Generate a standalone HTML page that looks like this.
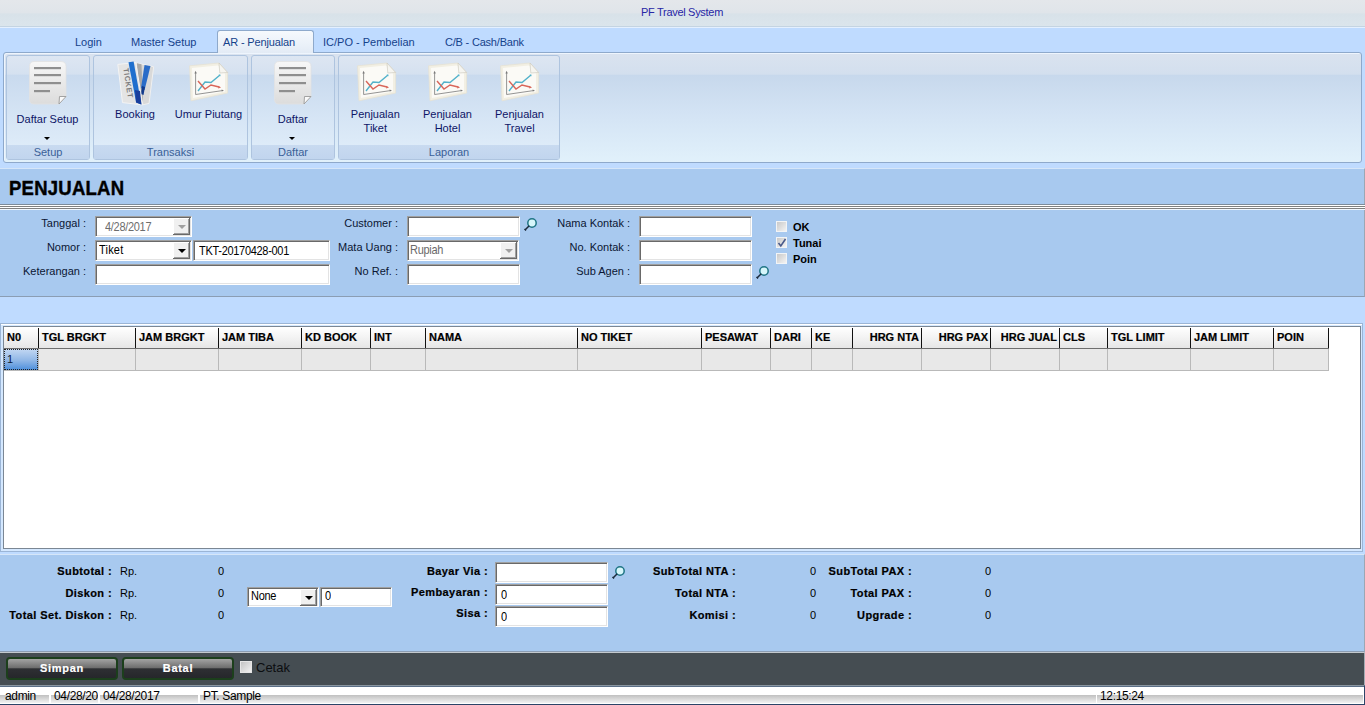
<!DOCTYPE html>
<html><head><meta charset="utf-8">
<style>
*{margin:0;padding:0;box-sizing:border-box}
html,body{width:1365px;height:705px;overflow:hidden;background:#bfdbff;font-family:"Liberation Sans",sans-serif;font-size:11px;line-height:13px;position:relative}
.a{position:absolute;white-space:nowrap}
#title{left:0;top:0;width:1365px;height:27px;background:linear-gradient(#e4e7eb,#e0e5ea 48%,#d8e2e9 54%,#dbe5ec);border-bottom:1px solid #c4d4e2}
#tabbar{left:0;top:27px;width:1365px;height:25px;background:#bfdbff;border-top:1px solid #e4f0ff}
.tab{color:#15428b;top:36px;z-index:2}
#acttab{left:217px;top:30px;width:97px;height:23px;border:1px solid #8ea9cb;border-bottom:none;border-radius:3px 3px 0 0;background:linear-gradient(#f6f9fd,#e9f0f8 70%,#e3ebf5)}
#ribbon{left:3px;top:52px;width:1359px;height:111px;border:1px solid #8ea9cb;border-radius:3px;background:linear-gradient(#dae3ef 0%,#d3dfee 19.5%,#c7d8ec 20.3%,#d3e3f4 55%,#e1f1fb 100%);box-shadow:inset 1px 1px 0 #eef5fd}
.grp{position:absolute;top:55px;height:105px;border:1px solid #aec4df;border-radius:3px;background:linear-gradient(#dde6f2 0%,#d5e1f0 17.6%,#c9daee 18.5%,#d6e5f5 60%,#e1eefa 100%)}
.glbl{position:absolute;left:0;right:0;bottom:0;height:14px;background:linear-gradient(#c8daf0,#c1d5ee);color:#3a6198;text-align:center;line-height:15px}
.btxt{color:#0e1566;text-align:center}
#formhdr{left:0;top:168px;width:1365px;height:36px;background:#a8c9ef;border-top:1px solid #d6e6f8;border-right:1px solid #9ba7b5}
#ptitle{left:9px;top:176px;-webkit-text-stroke:0.4px #000;font-size:18.5px;line-height:22px;font-weight:bold;color:#000;letter-spacing:0.25px;transform:scaleY(1.1);transform-origin:0 0}
#dbl{left:0;top:204px;width:1365px;height:6px;background:linear-gradient(#7d8b99 0,#7d8b99 1px,#fff 1px,#fff 2px,#808080 2px,#808080 3px,#fff 3px,#fff 4px,#808080 4px,#808080 5px,#f2f8ff 5px)}
#form{left:0;top:210px;width:1365px;height:87px;background:#a8c9ef;border-bottom:1px solid #8b9db3;border-right:1px solid #9ba7b5}
.lbl{color:#0b1633;text-align:right}
.tb{position:absolute;height:21px;background:#fff;border-top:1px solid #a0a0a0;border-left:1px solid #a0a0a0;border-right:1px solid #fff;border-bottom:1px solid #fff;box-shadow:inset 1px 1px 0 #696969,inset -1px -1px 0 #e3e3e3}
.tbt{position:absolute;left:3px;top:3px;color:#000;letter-spacing:-0.3px;transform:scaleY(1.12);transform-origin:0 0}
.cbtn{position:absolute;right:1px;top:1px;width:17px;height:17px;background:#f0f0f0;border-right:1px solid #696969;border-bottom:1px solid #696969;box-shadow:inset 1px 1px 0 #fff,inset -1px -1px 0 #a0a0a0}
.arr{position:absolute;left:5px;top:7px;width:0;height:0;border-left:4px solid transparent;border-right:4px solid transparent;border-top:4px solid #000}
.arr.dis{border-top-color:#a0a0a0}
.chk{position:absolute;width:11px;height:11px;border:1px solid #f2f4f6;background:linear-gradient(135deg,#c9c9c9,#f3f3f3)}
.cbl{font-weight:bold;color:#000}
#gridwrap{left:0;top:323px;width:1363px;height:229px;background:#d4e8ff;border:1px solid #9bb5d6;box-shadow:inset 0 1px 0 #fff}
#grid{left:3px;top:326px;width:1358px;height:223px;background:#fff;border:1px solid #7b8794}
.gh{position:absolute;top:327px;height:22px;background:linear-gradient(#ffffff,#f3f3f3 50%,#e6e6e6);border-bottom:1px solid #6e6e6e;font-weight:bold;color:#000;line-height:13px;padding:4px 0 0 3px;-webkit-text-stroke:0.2px #000}
.gh:after{content:"";position:absolute;right:0;top:1px;bottom:0;width:1px;background:#111}
.gc{position:absolute;top:349px;height:22px;background:#e8e8e8;border-bottom:1px solid #b9b9b9;border-right:1px solid #b9b9b9}
#bottom{left:0;top:554px;width:1365px;height:98px;background:#a8c9ef;border-top:1px solid #d6e6f8;border-right:1px solid #9ba7b5;border-bottom:1px solid #8b9db3}
.bl{font-weight:bold;color:#000;text-align:right;letter-spacing:0.4px;-webkit-text-stroke:0.2px #000}
.bv{color:#000}
#btnbar{left:0;top:652px;width:1365px;height:33px;background:#454d52;border-top:1px solid #c3c9ce;border-right:1px solid #a3abb3}
.btn{position:absolute;top:657px;height:23px;border:1px solid #1d4d1d;border-radius:4px;background:linear-gradient(#a3a3a3 0%,#6f6f6f 45%,#2e2f33 52%,#26272b 100%);color:#fff;font-weight:bold;text-align:center;line-height:19px;letter-spacing:0.7px;-webkit-text-stroke:0.2px #fff;border-width:2px;border-color:#1c3f1c}
#status{left:0;top:685px;width:1365px;height:20px;background:#fff;border-top:1px solid #8a96a0;box-shadow:inset 0 1px 0 #5b6f87;border-right:1px solid #2c4468}
.sp{position:absolute;top:687px;height:16px;background:linear-gradient(#ffffff 0,#ffffff 8px,#c0c0c0 8px,#f2f2f2 16px);color:#000;padding-left:5px;line-height:14px;padding-top:2px;font-size:12px;letter-spacing:-0.35px}
</style></head><body>
<div class="a" id="title"></div>
<div class="a" style="left:641px;top:6px;color:#2727a6;letter-spacing:-0.3px">PF Travel System</div>
<div class="a" id="tabbar"></div>
<div class="a tab" style="left:75px">Login</div>
<div class="a tab" style="left:131px">Master Setup</div>
<div class="a tab" style="left:223px;letter-spacing:-0.15px">AR - Penjualan</div>
<div class="a tab" style="left:323px">IC/PO - Pembelian</div>
<div class="a tab" style="left:445px;letter-spacing:-0.2px">C/B - Cash/Bank</div>
<div class="a" id="ribbon"></div>
<div class="a" id="acttab"></div>
<div class="grp" style="left:6px;width:84px"><div class="glbl">Setup</div></div>
<div class="grp" style="left:93px;width:155px"><div class="glbl">Transaksi</div></div>
<div class="grp" style="left:251px;width:84px"><div class="glbl">Daftar</div></div>
<div class="grp" style="left:338px;width:222px"><div class="glbl">Laporan</div></div>
<svg class="a" style="left:29px;top:61px" width="38" height="44" viewBox="0 0 38 44">
<defs><linearGradient id="dg29" x1="0" y1="0" x2="0" y2="1"><stop offset="0" stop-color="#f7f7f7"/><stop offset="1" stop-color="#dcdcdc"/></linearGradient></defs>
<path d="M5 0.5 H32 Q37 0.5 37 5.5 V35.5 L30 43 H5 Q0.5 43 0.5 38 V5.5 Q0.5 0.5 5 0.5Z" fill="url(#dg29)" stroke="#e2e2e2" stroke-width="0.8"/>
<rect x="5" y="6" width="27" height="2.2" fill="#8f8f8f"/>
<rect x="5" y="13" width="27" height="2.2" fill="#8f8f8f"/>
<rect x="5" y="21" width="27" height="2.2" fill="#8f8f8f"/>
<rect x="5" y="29" width="16" height="2.2" fill="#8f8f8f"/>
<path d="M30 43 L30.5 35.5 L37 35.5 Z" fill="#fafafa" stroke="#9a9a9a" stroke-width="0.9"/>
</svg>
<svg class="a" style="left:274px;top:61px" width="38" height="44" viewBox="0 0 38 44">
<defs><linearGradient id="dg274" x1="0" y1="0" x2="0" y2="1"><stop offset="0" stop-color="#f7f7f7"/><stop offset="1" stop-color="#dcdcdc"/></linearGradient></defs>
<path d="M5 0.5 H32 Q37 0.5 37 5.5 V35.5 L30 43 H5 Q0.5 43 0.5 38 V5.5 Q0.5 0.5 5 0.5Z" fill="url(#dg274)" stroke="#e2e2e2" stroke-width="0.8"/>
<rect x="5" y="6" width="27" height="2.2" fill="#8f8f8f"/>
<rect x="5" y="13" width="27" height="2.2" fill="#8f8f8f"/>
<rect x="5" y="21" width="27" height="2.2" fill="#8f8f8f"/>
<rect x="5" y="29" width="16" height="2.2" fill="#8f8f8f"/>
<path d="M30 43 L30.5 35.5 L37 35.5 Z" fill="#fafafa" stroke="#9a9a9a" stroke-width="0.9"/>
</svg>
<svg class="a" style="left:116px;top:60px" width="40" height="47" viewBox="0 0 40 47">
<path d="M19.7 2.8 L37.7 6.7 L33 43.4 L26.8 44.8 Z" fill="#d9d9d9" stroke="#f0f0f0" stroke-width="1"/>
<path d="M21 3.2 L25.5 4.2 L27 44 L24 44 Z" fill="#a9a9a9"/>
<path d="M28.5 5.1 L34.5 6.1 L28.6 30 L25 28 Z" fill="#2a6cc8"/>
<path d="M26 26 L29 27 L27.5 35 L25 34Z" fill="#123a8c"/>
<path d="M1.8 4.4 L19.7 2.6 L26.8 44.9 L6.5 42.6 Z" fill="#e4e4e4" stroke="#f4f4f4" stroke-width="1"/>
<path d="M12.5 2.2 L17.6 1.6 L25.4 44.6 L20.1 42.4 Z" fill="#1f6fce"/>
<path d="M19 30 L24 31 L25.4 44.6 L20.1 42.4Z" fill="#1a3f9c"/>
<text x="0" y="0" transform="translate(7.2,8.5) rotate(81)" font-family="Liberation Sans" font-weight="bold" font-size="7.6" fill="#7d7d7d" letter-spacing="0.5">TICKET</text>
</svg>
<svg class="a" style="left:188px;top:62px" width="41" height="41" viewBox="0 0 41 41">
<path d="M1.6 3.8 L31 1 L39.6 10.5 L39.6 31 L3 38.8 Z" fill="#f2efe3" stroke="#e6e2d4" stroke-width="0.8"/>
<path d="M4 6 L30 3.5 L37 11.5 L37 29.5 L5 36 Z" fill="#fbfaf6"/>
<path d="M31 1 L39.6 10.5 L31.8 11 Z" fill="#f6f5f0" stroke="#c9c6ba" stroke-width="0.6"/>
<path d="M7.6 10 V32.5 L35 28.5" stroke="#7a7a7a" stroke-width="0.8" fill="none"/>
<path d="M6.4 11.5 L7.6 8.8 L8.8 11.5Z M33.6 27.4 L36 28.4 L33.8 29.6Z" fill="#7a7a7a"/>
<path d="M10 29 L17 20 L23 20.5 L32 13" stroke="#52b2ca" stroke-width="1.4" fill="none"/>
<path d="M32.5 12.5 L30.5 12.8 L32.2 14.5Z" fill="#52b2ca"/>
<path d="M10 19 L17 27 L23 23 L31 25" stroke="#d8665a" stroke-width="1.4" fill="none"/>
<path d="M33 25.5 L30.5 23.8 L30.2 26.5Z" fill="#d8665a"/>
</svg>
<svg class="a" style="left:356px;top:62px" width="41" height="41" viewBox="0 0 41 41">
<path d="M1.6 3.8 L31 1 L39.6 10.5 L39.6 31 L3 38.8 Z" fill="#f2efe3" stroke="#e6e2d4" stroke-width="0.8"/>
<path d="M4 6 L30 3.5 L37 11.5 L37 29.5 L5 36 Z" fill="#fbfaf6"/>
<path d="M31 1 L39.6 10.5 L31.8 11 Z" fill="#f6f5f0" stroke="#c9c6ba" stroke-width="0.6"/>
<path d="M7.6 10 V32.5 L35 28.5" stroke="#7a7a7a" stroke-width="0.8" fill="none"/>
<path d="M6.4 11.5 L7.6 8.8 L8.8 11.5Z M33.6 27.4 L36 28.4 L33.8 29.6Z" fill="#7a7a7a"/>
<path d="M10 29 L17 20 L23 20.5 L32 13" stroke="#52b2ca" stroke-width="1.4" fill="none"/>
<path d="M32.5 12.5 L30.5 12.8 L32.2 14.5Z" fill="#52b2ca"/>
<path d="M10 19 L17 27 L23 23 L31 25" stroke="#d8665a" stroke-width="1.4" fill="none"/>
<path d="M33 25.5 L30.5 23.8 L30.2 26.5Z" fill="#d8665a"/>
</svg>
<svg class="a" style="left:427px;top:62px" width="41" height="41" viewBox="0 0 41 41">
<path d="M1.6 3.8 L31 1 L39.6 10.5 L39.6 31 L3 38.8 Z" fill="#f2efe3" stroke="#e6e2d4" stroke-width="0.8"/>
<path d="M4 6 L30 3.5 L37 11.5 L37 29.5 L5 36 Z" fill="#fbfaf6"/>
<path d="M31 1 L39.6 10.5 L31.8 11 Z" fill="#f6f5f0" stroke="#c9c6ba" stroke-width="0.6"/>
<path d="M7.6 10 V32.5 L35 28.5" stroke="#7a7a7a" stroke-width="0.8" fill="none"/>
<path d="M6.4 11.5 L7.6 8.8 L8.8 11.5Z M33.6 27.4 L36 28.4 L33.8 29.6Z" fill="#7a7a7a"/>
<path d="M10 29 L17 20 L23 20.5 L32 13" stroke="#52b2ca" stroke-width="1.4" fill="none"/>
<path d="M32.5 12.5 L30.5 12.8 L32.2 14.5Z" fill="#52b2ca"/>
<path d="M10 19 L17 27 L23 23 L31 25" stroke="#d8665a" stroke-width="1.4" fill="none"/>
<path d="M33 25.5 L30.5 23.8 L30.2 26.5Z" fill="#d8665a"/>
</svg>
<svg class="a" style="left:499px;top:62px" width="41" height="41" viewBox="0 0 41 41">
<path d="M1.6 3.8 L31 1 L39.6 10.5 L39.6 31 L3 38.8 Z" fill="#f2efe3" stroke="#e6e2d4" stroke-width="0.8"/>
<path d="M4 6 L30 3.5 L37 11.5 L37 29.5 L5 36 Z" fill="#fbfaf6"/>
<path d="M31 1 L39.6 10.5 L31.8 11 Z" fill="#f6f5f0" stroke="#c9c6ba" stroke-width="0.6"/>
<path d="M7.6 10 V32.5 L35 28.5" stroke="#7a7a7a" stroke-width="0.8" fill="none"/>
<path d="M6.4 11.5 L7.6 8.8 L8.8 11.5Z M33.6 27.4 L36 28.4 L33.8 29.6Z" fill="#7a7a7a"/>
<path d="M10 29 L17 20 L23 20.5 L32 13" stroke="#52b2ca" stroke-width="1.4" fill="none"/>
<path d="M32.5 12.5 L30.5 12.8 L32.2 14.5Z" fill="#52b2ca"/>
<path d="M10 19 L17 27 L23 23 L31 25" stroke="#d8665a" stroke-width="1.4" fill="none"/>
<path d="M33 25.5 L30.5 23.8 L30.2 26.5Z" fill="#d8665a"/>
</svg>
<div class="a btxt" style="left:-2.5px;top:113px;width:100px">Daftar Setup</div>
<div class="a btxt" style="left:85px;top:108px;width:100px">Booking</div>
<div class="a btxt" style="left:158.5px;top:108px;width:100px">Umur Piutang</div>
<div class="a btxt" style="left:242.8px;top:113px;width:100px">Daftar</div>
<div class="a btxt" style="left:325.3px;top:108px;width:100px">Penjualan</div>
<div class="a btxt" style="left:325.3px;top:122px;width:100px">Tiket</div>
<div class="a btxt" style="left:397.5px;top:108px;width:100px">Penjualan</div>
<div class="a btxt" style="left:397.5px;top:122px;width:100px">Hotel</div>
<div class="a btxt" style="left:469.5px;top:108px;width:100px">Penjualan</div>
<div class="a btxt" style="left:469.5px;top:122px;width:100px">Travel</div>
<div class="a" style="left:43.5px;top:137px;width:0;height:0;border-left:3px solid transparent;border-right:3px solid transparent;border-top:3px solid #000"></div>
<div class="a" style="left:288.7px;top:137px;width:0;height:0;border-left:3px solid transparent;border-right:3px solid transparent;border-top:3px solid #000"></div>

<div class="a" id="formhdr"></div>
<div class="a" id="ptitle">PENJUALAN</div>
<div class="a" id="dbl"></div>
<div class="a" id="form"></div>
<div class="a lbl" style="right:1279px;top:217px;">Tanggal :</div>
<div class="a lbl" style="right:1279px;top:241px;">Nomor :</div>
<div class="a lbl" style="right:1279px;top:265px;">Keterangan :</div>
<div class="tb" style="left:95px;top:216px;width:97px"><div class="tbt" style="left:9px;color:#6d6d6d;top:3px">4/28/2017</div><div class="cbtn"><div class="arr dis"></div></div></div>
<div class="tb" style="left:95px;top:240px;width:97px"><div class="tbt" style="top:2px;letter-spacing:0.2px">Tiket</div><div class="cbtn"><div class="arr"></div></div></div>
<div class="tb" style="left:193px;top:240px;width:137px;height:21px"><div class="tbt" style="top:3px;left:5px">TKT-20170428-001</div></div>
<div class="tb" style="left:95px;top:264px;width:235px;height:21px"></div>
<div class="a lbl" style="right:967px;top:217px;">Customer :</div>
<div class="a lbl" style="right:967px;top:241px;">Mata Uang :</div>
<div class="a lbl" style="right:967px;top:265px;">No Ref. :</div>
<div class="tb" style="left:407px;top:216px;width:113px;height:21px"></div>
<div class="a" style="left:523px;top:217px"><svg width="15" height="15" viewBox="0 0 15 15"><circle cx="9" cy="6" r="4.2" fill="#d6f6fa" stroke="#1f7585" stroke-width="1.5"/><line x1="6.2" y1="8.8" x2="2" y2="13" stroke="#1b2a3c" stroke-width="1.5"/><line x1="1.5" y1="12" x2="3" y2="13.5" stroke="#1b2a3c" stroke-width="1.2"/></svg></div>
<div class="tb" style="left:407px;top:240px;width:112px"><div class="tbt" style="top:2px;left:2px;color:#6a6a6a">Rupiah</div><div class="cbtn"><div class="arr dis"></div></div></div>
<div class="tb" style="left:407px;top:264px;width:113px;height:21px"></div>
<div class="a lbl" style="right:735px;top:217px;">Nama Kontak :</div>
<div class="a lbl" style="right:735px;top:241px;">No. Kontak :</div>
<div class="a lbl" style="right:735px;top:265px;">Sub Agen :</div>
<div class="tb" style="left:639px;top:216px;width:113px;height:21px"></div>
<div class="tb" style="left:639px;top:240px;width:113px;height:21px"></div>
<div class="tb" style="left:639px;top:264px;width:113px;height:21px"></div>
<div class="a" style="left:755px;top:265px"><svg width="15" height="15" viewBox="0 0 15 15"><circle cx="9" cy="6" r="4.2" fill="#d6f6fa" stroke="#1f7585" stroke-width="1.5"/><line x1="6.2" y1="8.8" x2="2" y2="13" stroke="#1b2a3c" stroke-width="1.5"/><line x1="1.5" y1="12" x2="3" y2="13.5" stroke="#1b2a3c" stroke-width="1.2"/></svg></div>
<div class="chk" style="left:776px;top:221px"></div>
<div class="a cbl" style="left:793px;top:221px;">OK</div>
<div class="chk" style="left:776px;top:237px"></div>
<div class="a cbl" style="left:793px;top:237px;">Tunai</div>
<div class="chk" style="left:776px;top:253px"></div>
<div class="a cbl" style="left:793px;top:253px;">Poin</div>
<svg class="a" style="left:777px;top:238px" width="10" height="10" viewBox="0 0 10 10"><path d="M1.5 5 L3.8 8 L8.5 1" stroke="#4a5a8a" stroke-width="1.6" fill="none"/></svg>

<div class="a" id="gridwrap"></div>
<div class="a" id="grid"></div>
<div class="gh" style="left:4px;width:35px;">N0</div>
<div class="gc" style="left:4px;width:35px;background:linear-gradient(#c3d8f3,#8fb6e6 55%,#4d8fdc);border-right:1px solid #b9b9b9"><div style="position:absolute;left:0;top:0;right:0;bottom:0;border:1px dotted #222"></div><div class="a" style="left:3px;top:4px;color:#0a1a3a">1</div></div>
<div class="gh" style="left:39px;width:97px;">TGL BRGKT</div>
<div class="gc" style="left:39px;width:97px"></div>
<div class="gh" style="left:136px;width:83px;">JAM BRGKT</div>
<div class="gc" style="left:136px;width:83px"></div>
<div class="gh" style="left:219px;width:83px;">JAM TIBA</div>
<div class="gc" style="left:219px;width:83px"></div>
<div class="gh" style="left:302px;width:69px;">KD BOOK</div>
<div class="gc" style="left:302px;width:69px"></div>
<div class="gh" style="left:371px;width:55px;">INT</div>
<div class="gc" style="left:371px;width:55px"></div>
<div class="gh" style="left:426px;width:152px;">NAMA</div>
<div class="gc" style="left:426px;width:152px"></div>
<div class="gh" style="left:578px;width:124px;">NO TIKET</div>
<div class="gc" style="left:578px;width:124px"></div>
<div class="gh" style="left:702px;width:69px;">PESAWAT</div>
<div class="gc" style="left:702px;width:69px"></div>
<div class="gh" style="left:771px;width:41px;">DARI</div>
<div class="gc" style="left:771px;width:41px"></div>
<div class="gh" style="left:812px;width:41px;">KE</div>
<div class="gc" style="left:812px;width:41px"></div>
<div class="gh" style="left:853px;width:69px;text-align:right;padding:4px 3px 0 0;">HRG NTA</div>
<div class="gc" style="left:853px;width:69px"></div>
<div class="gh" style="left:922px;width:69px;text-align:right;padding:4px 3px 0 0;">HRG PAX</div>
<div class="gc" style="left:922px;width:69px"></div>
<div class="gh" style="left:991px;width:69px;text-align:right;padding:4px 3px 0 0;">HRG JUAL</div>
<div class="gc" style="left:991px;width:69px"></div>
<div class="gh" style="left:1060px;width:48px;">CLS</div>
<div class="gc" style="left:1060px;width:48px"></div>
<div class="gh" style="left:1108px;width:83px;">TGL LIMIT</div>
<div class="gc" style="left:1108px;width:83px"></div>
<div class="gh" style="left:1191px;width:83px;">JAM LIMIT</div>
<div class="gc" style="left:1191px;width:83px"></div>
<div class="gh" style="left:1274px;width:55px;">POIN</div>
<div class="gc" style="left:1274px;width:55px"></div>

<div class="a" id="bottom"></div>
<div class="a bl" style="right:1253px;top:565px;">Subtotal :</div>
<div class="a bv" style="left:120px;top:565px;">Rp.</div>
<div class="a bv" style="right:1141px;top:565px;">0</div>
<div class="a bl" style="right:1253px;top:587px;">Diskon :</div>
<div class="a bv" style="left:120px;top:587px;">Rp.</div>
<div class="a bv" style="right:1141px;top:587px;">0</div>
<div class="a bl" style="right:1253px;top:609px;">Total Set. Diskon :</div>
<div class="a bv" style="left:120px;top:609px;">Rp.</div>
<div class="a bv" style="right:1141px;top:609px;">0</div>
<div class="tb" style="left:247px;top:587px;width:72px;height:20px"><div class="tbt" style="top:1px;left:3px">None</div><div class="cbtn"><div class="arr"></div></div></div>
<div class="tb" style="left:320px;top:587px;width:72px;height:20px"><div class="tbt" style="top:1px;left:4px">0</div></div>
<div class="a bl" style="right:877px;top:565px;">Bayar Via :</div>
<div class="a bl" style="right:877px;top:586px;">Pembayaran :</div>
<div class="a bl" style="right:877px;top:607px;">Sisa :</div>
<div class="tb" style="left:495px;top:562px;width:113px;height:21px"></div>
<div class="tb" style="left:495px;top:584px;width:113px;height:21px"><div class="tbt" style="top:3px;left:5px">0</div></div>
<div class="tb" style="left:495px;top:606px;width:113px;height:21px"><div class="tbt" style="top:3px;left:5px">0</div></div>
<div class="a" style="left:611px;top:565px"><svg width="15" height="15" viewBox="0 0 15 15"><circle cx="9" cy="6" r="4.2" fill="#d6f6fa" stroke="#1f7585" stroke-width="1.5"/><line x1="6.2" y1="8.8" x2="2" y2="13" stroke="#1b2a3c" stroke-width="1.5"/><line x1="1.5" y1="12" x2="3" y2="13.5" stroke="#1b2a3c" stroke-width="1.2"/></svg></div>
<div class="a bl" style="right:629px;top:565px;">SubTotal NTA :</div>
<div class="a bv" style="right:549px;top:565px;">0</div>
<div class="a bl" style="right:629px;top:587px;">Total NTA :</div>
<div class="a bv" style="right:549px;top:587px;">0</div>
<div class="a bl" style="right:629px;top:609px;">Komisi :</div>
<div class="a bv" style="right:549px;top:609px;">0</div>
<div class="a bl" style="right:453px;top:565px;">SubTotal PAX :</div>
<div class="a bv" style="right:374px;top:565px;">0</div>
<div class="a bl" style="right:453px;top:587px;">Total PAX :</div>
<div class="a bv" style="right:374px;top:587px;">0</div>
<div class="a bl" style="right:453px;top:609px;">Upgrade :</div>
<div class="a bv" style="right:374px;top:609px;">0</div>
<div class="a" id="btnbar"></div>
<div class="btn" style="left:6px;width:112px">Simpan</div>
<div class="btn" style="left:122px;width:112px">Batal</div>
<div class="a" style="left:240px;top:661px;width:12px;height:12px;border:1px solid #e6e6e6;background:linear-gradient(135deg,#c4c4c4,#f2f2f2)"></div>
<div class="a" style="left:256px;top:660px;font-size:13px;line-height:15px;color:#0c0e10">Cetak</div>
<div class="a" id="status"></div>
<div class="sp" style="left:0px;width:49px;overflow:hidden;padding-left:5px">admin</div>
<div class="sp" style="left:51px;width:47px;overflow:hidden;padding-left:3px">04/28/2017</div>
<div class="sp" style="left:100px;width:98px;overflow:hidden;padding-left:3px">04/28/2017</div>
<div class="sp" style="left:200px;width:896px;overflow:hidden;padding-left:3px">PT. Sample</div>
<div class="sp" style="left:1097px;width:266px;overflow:hidden;padding-left:3px">12:15:24</div>
<div class="a" style="left:0;top:704px;width:1365px;height:1px;background:#2c4468"></div>
</body></html>
